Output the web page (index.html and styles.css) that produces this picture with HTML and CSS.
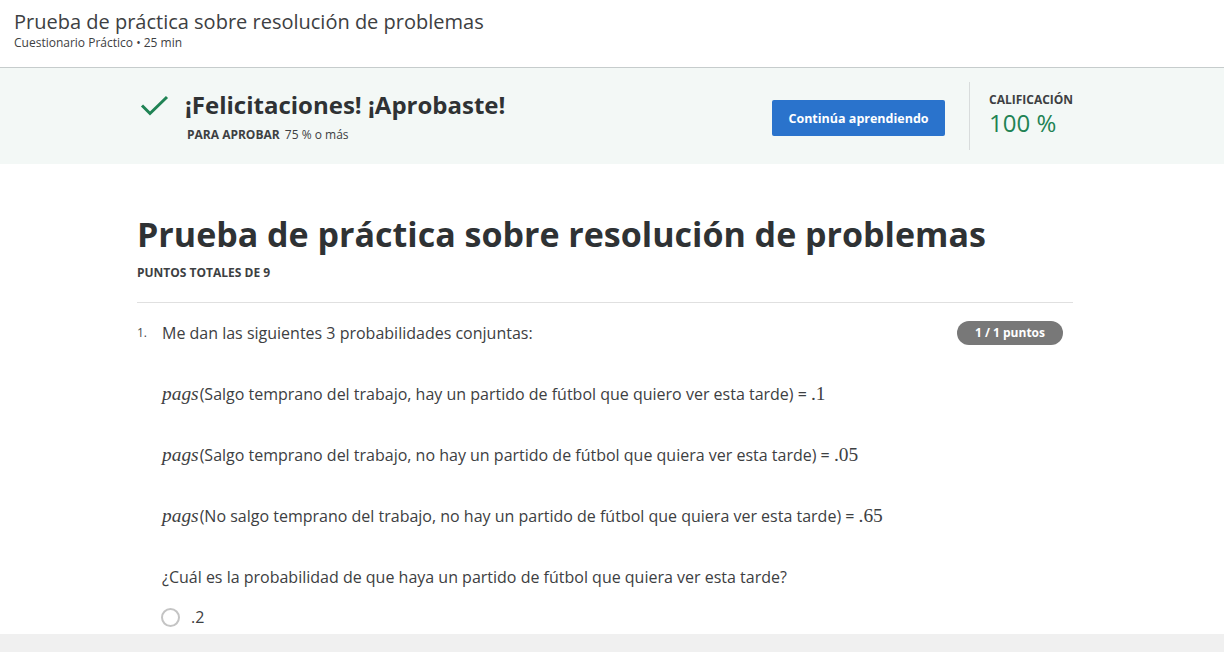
FILE: index.html
```html
<!DOCTYPE html>
<html lang="es">
<head>
<meta charset="utf-8">
<title>Prueba de práctica sobre resolución de problemas</title>
<link rel="stylesheet" href="styles.css">
</head>
<body>
<header class="topbar">
  <div class="topbar-title">Prueba de práctica sobre resolución de problemas</div>
  <div class="topbar-sub">Cuestionario Práctico • 25 min</div>
</header>
<section class="banner">
  <div class="banner-inner">
    <svg class="check" width="30" height="22" viewBox="0 0 30 22" aria-hidden="true">
      <path d="M2 10.5 L10 18.5 L27 2" fill="none" stroke="#1f8354" stroke-width="3"/>
    </svg>
    <div class="banner-text">
      <div class="banner-head">¡Felicitaciones! ¡Aprobaste!</div>
      <div class="banner-pass"><span class="pass-label">PARA APROBAR</span> 75 % o más</div>
    </div>
    <button class="btn">Continúa aprendiendo</button>
    <div class="divider"></div>
    <div class="grade">
      <div class="grade-label">CALIFICACIÓN</div>
      <div class="grade-value">100 %</div>
    </div>
  </div>
</section>
<main class="content">
  <h1 class="title">Prueba de práctica sobre resolución de problemas</h1>
  <div class="total">PUNTOS TOTALES DE 9</div>
  <div class="rule"></div>
  <div class="question">
    <div class="qnum">1.</div>
    <div class="qbody">
      <div class="qhead">
        <p class="qtext">Me dan las siguientes 3 probabilidades conjuntas:</p>
        <span class="badge">1 / 1 puntos</span>
      </div>
      <p class="formula"><span class="math">pags</span>(Salgo temprano del trabajo, hay un partido de fútbol que quiero ver esta tarde) = <span class="num">.1</span></p>
      <p class="formula"><span class="math">pags</span>(Salgo temprano del trabajo, no hay un partido de fútbol que quiera ver esta tarde) = <span class="num">.05</span></p>
      <p class="formula"><span class="math">pags</span>(No salgo temprano del trabajo, no hay un partido de fútbol que quiera ver esta tarde) = <span class="num">.65</span></p>
      <p class="prompt">¿Cuál es la probabilidad de que haya un partido de fútbol que quiera ver esta tarde?</p>
      <label class="option"><span class="radio"></span><span class="opt-text">.2</span></label>
    </div>
  </div>
</main>
<footer class="bottom"></footer>
</body>
</html>
```
FILE: styles.css
```css
* { box-sizing: border-box; }
html, body { margin: 0; padding: 0; }
body {
  font-family: "Open Sans", "Liberation Sans", sans-serif;
  color: #373a3c;
  background: #fff;
  width: 1224px;
  height: 652px;
  overflow: hidden;
  display: flex;
  flex-direction: column;
}
.topbar {
  height: 68px;
  padding: 8px 14px 0;
  border-bottom: 1px solid #c6cccc;
  flex: none;
}
.topbar-title {
  font-size: 20px;
  line-height: 28px;
  color: #3d4042;
}
.topbar-sub {
  font-size: 12px;
  line-height: 14px;
  color: #3d4042;
}
.banner {
  background: #f3f8f6;
  height: 96px;
  flex: none;
}
.banner-inner {
  display: flex;
  align-items: flex-start;
  padding: 0 151px 0 140px;
  height: 100%;
}
.check {
  margin-top: 27px;
  flex: none;
}
.banner-text {
  margin-left: 15px;
  margin-top: 20px;
}
.banner-head {
  font-size: 24px;
  font-weight: 700;
  line-height: 34px;
  color: #2f3234;
}
.banner-pass {
  font-size: 12px;
  line-height: 16px;
  margin-top: 5px;
  margin-left: 2px;
  color: #3d4042;
}
.pass-label {
  font-weight: 700;
  margin-right: 2px;
}
.btn {
  margin-left: auto;
  margin-top: 32px;
  width: 173px;
  height: 36px;
  background: #2a73cc;
  border: none;
  border-radius: 2px;
  color: #fff;
  font-family: "Open Sans", sans-serif;
  font-weight: 700;
  font-size: 12.5px;
  padding: 0;
  flex: none;
}
.divider {
  width: 1px;
  background: #d8dcdc;
  margin: 14px 19px 0 24px;
  height: 68px;
  flex: none;
}
.grade {
  width: 84px;
  margin-top: 24px;
  flex: none;
}
.grade-label {
  font-size: 12px;
  font-weight: 700;
  line-height: 16px;
  color: #3d4042;
  white-space: nowrap;
}
.grade-value {
  font-size: 24px;
  line-height: 26px;
  margin-top: 2px;
  color: #1f8354;
  white-space: nowrap;
}
.content {
  flex: 1;
  padding: 0 0 0 137px;
  box-sizing: content-box;
  width: 936px;
}
.title {
  margin: 46px 0 0;
  font-size: 34px;
  line-height: 48px;
  font-weight: 700;
  color: #2f3234;
}
.total {
  margin-top: 7px;
  font-size: 12px;
  font-weight: 700;
  line-height: 16px;
  color: #3d4042;
}
.rule {
  height: 1px;
  background: #e0e0e0;
  margin-top: 21px;
}
.question {
  display: flex;
  margin-top: 18px;
}
.qnum {
  width: 25px;
  font-size: 12px;
  line-height: 24px;
  color: #4a4d4f;
}
.qbody {
  flex: 1;
  font-size: 16px;
  color: #3d4042;
}
.qhead {
  display: flex;
  justify-content: space-between;
  align-items: center;
  padding-right: 10px;
}
.qtext, .formula, .prompt {
  margin: 0;
  line-height: 24px;
}
.badge {
  background: #787878;
  color: #fff;
  font-size: 12px;
  font-weight: 700;
  line-height: 24px;
  height: 24px;
  padding: 0 18px;
  border-radius: 12px;
}
.formula { margin-top: 37px; }
.prompt { margin-top: 37px; }
.math {
  font-family: "Liberation Serif", "DejaVu Serif", serif;
  font-style: italic;
  font-size: 19.4px;
  line-height: 0;
  margin-right: 1px;
}
.num {
  font-family: "Liberation Serif", "DejaVu Serif", serif;
  font-size: 19.4px;
  line-height: 0;
}
.option {
  display: flex;
  align-items: center;
  margin-top: 18px;
}
.radio {
  width: 19px;
  height: 19px;
  border: 2px solid #c4c4c4;
  border-radius: 50%;
  margin-left: -1px;
}
.opt-text {
  margin-left: 11px;
  line-height: 20px;
}
.bottom {
  height: 18px;
  background: #f0f0f0;
  flex: none;
}
```
